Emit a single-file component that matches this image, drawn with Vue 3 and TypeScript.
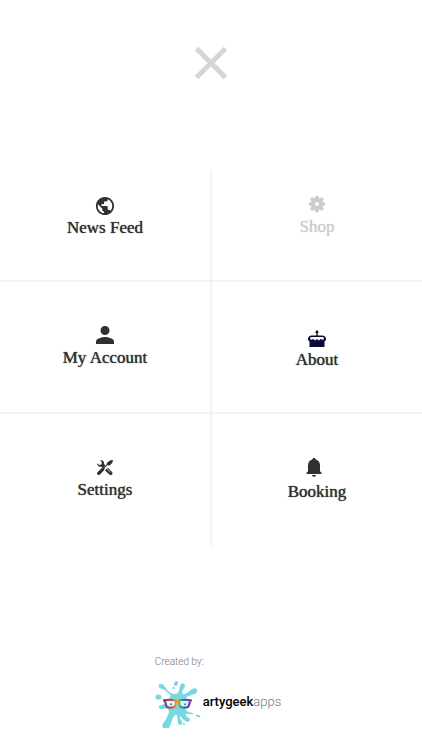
<script setup lang="ts">
interface MenuItem {
  label: string
  icon: 'globe' | 'flower' | 'person' | 'cake' | 'tools' | 'bell'
  href: string
  active?: boolean
}

const items: MenuItem[] = [
  { label: 'News Feed', icon: 'globe', href: '#news' },
  { label: 'Shop', icon: 'flower', href: '#shop', active: true },
  { label: 'My Account', icon: 'person', href: '#account' },
  { label: 'About', icon: 'cake', href: '#about' },
  { label: 'Settings', icon: 'tools', href: '#settings' },
  { label: 'Booking', icon: 'bell', href: '#booking' },
]
</script>

<template>
  <main class="page">
    <header class="top">
      <button class="close" type="button" aria-label="Close menu">
        <svg width="34" height="34" viewBox="0 0 34 34" aria-hidden="true">
          <path d="M2.500 2.500L31.500 31.500M31.500 2.500L2.500 31.500" fill="none" stroke="#d6d6d6" stroke-width="5" />
        </svg>
      </button>
    </header>

    <nav class="menu">
      <a v-for="item in items" :key="item.label" :href="item.href" class="item" :class="[item.icon, { active: item.active }]">
        <svg v-if="item.icon === 'globe'" class="icon" width="20" height="20" viewBox="1 1 22 22" aria-hidden="true">
          <path fill="currentColor" d="M12 2C6.480 2 2 6.480 2 12s4.480 10 10 10 10-4.480 10-10S17.520 2 12 2zm-1 17.930c-3.950-.49-7-3.850-7-7.930 0-.62.08-1.210.21-1.790L9 15v1c0 1.100.9 2 2 2v1.930zm6.900-2.540c-.26-.81-1-1.390-1.900-1.390h-1v-3c0-.55-.45-1-1-1H8v-2h2c.55 0 1-.45 1-1V7h2c1.100 0 2-.9 2-2v-.41c2.930 1.190 5 4.060 5 7.410 0 2.080-.8 3.970-2.100 5.390z" />
        </svg>
        <svg v-else-if="item.icon === 'flower'" class="icon" width="18" height="18" viewBox="0 0 18 18" aria-hidden="true">
          <g fill="currentColor">
            <ellipse v-for="n in 8" :key="n" cx="9" cy="3" rx="2.100" ry="2.500" :transform="`rotate(${n * 45} 9 9)`" />
            <circle cx="9" cy="9" r="5.500" />
          </g>
          <circle cx="9" cy="9" r="2" fill="#fff" />
        </svg>
        <svg v-else-if="item.icon === 'person'" class="icon" width="18" height="18" viewBox="0 0 18 18" aria-hidden="true">
          <path fill="currentColor" d="M9 9a4.500 4.500 0 1 0 0-9 4.500 4.500 0 0 0 0 9zM0 18v-2.400c0-3 6-4.500 9-4.500s9 1.500 9 4.500V18z" />
        </svg>
        <svg v-else-if="item.icon === 'cake'" class="icon" width="18" height="18" viewBox="0 0 18 18" aria-hidden="true">
          <path fill="currentColor" d="M9 0l1.300 1.500c.7 1-.2 2-1.300 2s-2-1-1.300-2zM8.300 3h1.400v3H8.300zM4 5.500h10c2.500 0 4 1.500 4 3.200 0 1.300-.6 2.200-1.500 2.700V17H1.500v-5.600C.6 10.900 0 10 0 8.700c0-1.700 1.500-3.200 4-3.200z" />
          <path fill="#fff" d="M4 7h10c1.300 0 2 .7 2 1.600 0 1-1 1.500-2 1l-1.500-.6-1.500 1.600-2-1.600-2 1.600L5.500 9 4 9.600c-1 .5-2 0-2-1C2 7.700 2.700 7 4 7z" />
        </svg>
        <svg v-else-if="item.icon === 'tools'" class="icon" width="16" height="16" viewBox="0 0 16 16" aria-hidden="true">
          <path fill="currentColor" d="M3.200.4C5.600-.3 7.600 1.500 7 3.900l7.900 7.800c1.200 1.200.5 3.300-1.200 3.400-.7 0-1.200-.3-1.700-.8L4.200 6.500C2 7.300-.1 5.600.1 3.200l2 1.900 2.200-.7.600-2.100z" />
          <path d="M8.500 7l5 5.400" stroke="#fff" stroke-width=".7" />
          <path d="M1 15.500L15.500.5" stroke="#fff" stroke-width="3" />
          <path fill="currentColor" d="M13 .6L15.400 0l.6.600-.8 2.400-2.600 2.500-2.300-.2-3 3.100.3 1.300-4.700 4.800c-.8.8-1.800.7-2.400.1-.7-.6-.7-1.600.1-2.400l4.700-4.700 1.300.2 3-3.100.2-1.600z" />
        </svg>
        <svg v-else class="icon" width="16" height="20" viewBox="0 0 16 20" aria-hidden="true">
          <path fill="currentColor" d="M8 0c1 0 1.700.7 1.700 1.600C12.300 2.300 14 4.500 14 7.300v6l1.500 1.400V16H.5v-1.300L2 13.300v-6c0-2.800 1.700-5 4.300-5.700C6.300.7 7 0 8 0zM6 17h4c0 1.200-1 1.800-2 1.800S6 18.200 6 17z" />
        </svg>
        <span class="label">{{ item.label }}</span>
      </a>
    </nav>

    <footer class="credit">
      <div class="credit-inner">
        <p class="created">Created by:</p>
        <div class="brand">
          <svg width="46" height="48" viewBox="4 4 46 48" aria-hidden="true">
            <defs>
              <linearGradient id="rainbow" x1="12" y1="0" x2="41" y2="0" gradientUnits="userSpaceOnUse">
                <stop offset="0" stop-color="#264a9b" />
                <stop offset=".13" stop-color="#9c3a72" />
                <stop offset=".3" stop-color="#e33b35" />
                <stop offset=".48" stop-color="#f6a529" />
                <stop offset=".6" stop-color="#55aa48" />
                <stop offset=".74" stop-color="#2b62b7" />
                <stop offset="1" stop-color="#a02c91" />
              </linearGradient>
            </defs>
            <g fill="#78d7e1">
              <path d="M20 19C16 17 14 13 11 13 8 13 6 9 9 8c3-1 5 3 7 6 2 2 5 4 8 4 4 0 4-4 5-8 1-4 5-3 5 0-1 3-4 6-2 8 3 1 6-3 9-5 3-2 6 0 5 3-2 4-8 2-11 6-1 2 5 2 5 5-1 4-5 4-5 7 1 3 7 2 8 4-3 1-6-1-8 0-1 3 4 3 4 6-1 3-4 2-6 0-2-1-3-5-4-3 0 3 3 4 2 7-1 2-4 1-4-2-1-3 0-7-2-7-3 0-4 6-6 11-1 3-5 4-7 2-2-3 1-6 3-9 2-4 4-7 2-10-2-2-5 1-8 0-2-1-1-4 1-4 3-1 7-1 8-5 0-2 2-3 1-5z" />
              <ellipse cx="25" cy="7.500" rx="2" ry="2.600" transform="rotate(30 25 7.500)" />
              <circle cx="22.500" cy="12" r="1.200" />
              <ellipse cx="7.500" cy="21" rx="3" ry="2.600" />
              <circle cx="33" cy="48" r="1.100" />
              <ellipse cx="47" cy="40" rx="2.500" ry="1" transform="rotate(15 47 40)" />
            </g>
            <path fill="#d9f6fa" d="M15 25h10l-1 6-7 1zM29 25h9l-2 7-6-1z" />
            <path fill="none" stroke="url(#rainbow)" stroke-width="2" stroke-linejoin="round" d="M12 24.500q6-1.500 14 .3 8-1.800 15-.3M14 25l1 4q.5 2.500 3 2.500h3.500q2.500 0 3-2.500l.5-3h3l.5 3q.5 2.500 3 2.500h3.500q2.500 0 3-2.500l1-4" />
            <path fill="#248baf" d="M19 27.500h2v1.500h-2zM33 27.500h2v1.500h-2z" />
          </svg>
          <span class="name"><span class="strong">artygeek</span>apps</span>
        </div>
      </div>
    </footer>
  </main>
</template>

<style>
body {
  margin: 0;
  background: #fff;
}
</style>

<style scoped>
.page {
  display: flex;
  flex-direction: column;
  color: #303030;
}

.top {
  display: flex;
  justify-content: center;
  padding: 46px 0 90px;
}

.close {
  display: flex;
  padding: 0;
  border: 0;
  background: none;
  cursor: pointer;
}

.menu {
  display: grid;
  grid-template-columns: calc(50% + 1px) 1fr;
  grid-template-rows: 112px 132px 132px;
}

.item {
  display: flex;
  flex-direction: column;
  align-items: center;
  gap: 4px;
  box-sizing: border-box;
  padding-top: 44px;
  border-bottom: 2px solid #f3f3f3;
  color: inherit;
  text-decoration: none;
}

.item:nth-child(odd) {
  border-right: 2px solid #f3f3f3;
}

.item:nth-last-child(-n + 2) {
  border-bottom: 0;
}

.icon {
  display: block;
  flex: none;
}

.label {
  font-family: "Liberation Serif", serif;
  font-size: 17px;
  line-height: 20px;
  text-shadow: 0 0 1px currentColor;
}

.globe {
  gap: 2px;
  padding-top: 26px;
}

.flower {
  padding-top: 25px;
}

.cake {
  gap: 2px;
  padding-top: 48px;
}

.tools {
  padding-top: 46px;
}

.bell .icon {
  margin-right: 6px;
}

.active {
  color: #ccc;
}

.cake .icon {
  color: #0b0b3b;
}

.credit {
  display: flex;
  justify-content: center;
  padding: 108px 0 22px;
  font-family: Roboto, sans-serif;
}

.credit-inner {
  padding-left: 14px;
}

.created {
  margin: 0;
  font-size: 10px;
  font-weight: 300;
  line-height: 16px;
  color: #777;
}

.brand {
  display: flex;
  align-items: center;
  gap: 2px;
  padding-top: 10px;
}

.name {
  padding-bottom: 4px;
  font-size: 13px;
  font-weight: 300;
  line-height: 18px;
  color: #777;
}

.strong {
  font-weight: 500;
  color: #000;
}
</style>
